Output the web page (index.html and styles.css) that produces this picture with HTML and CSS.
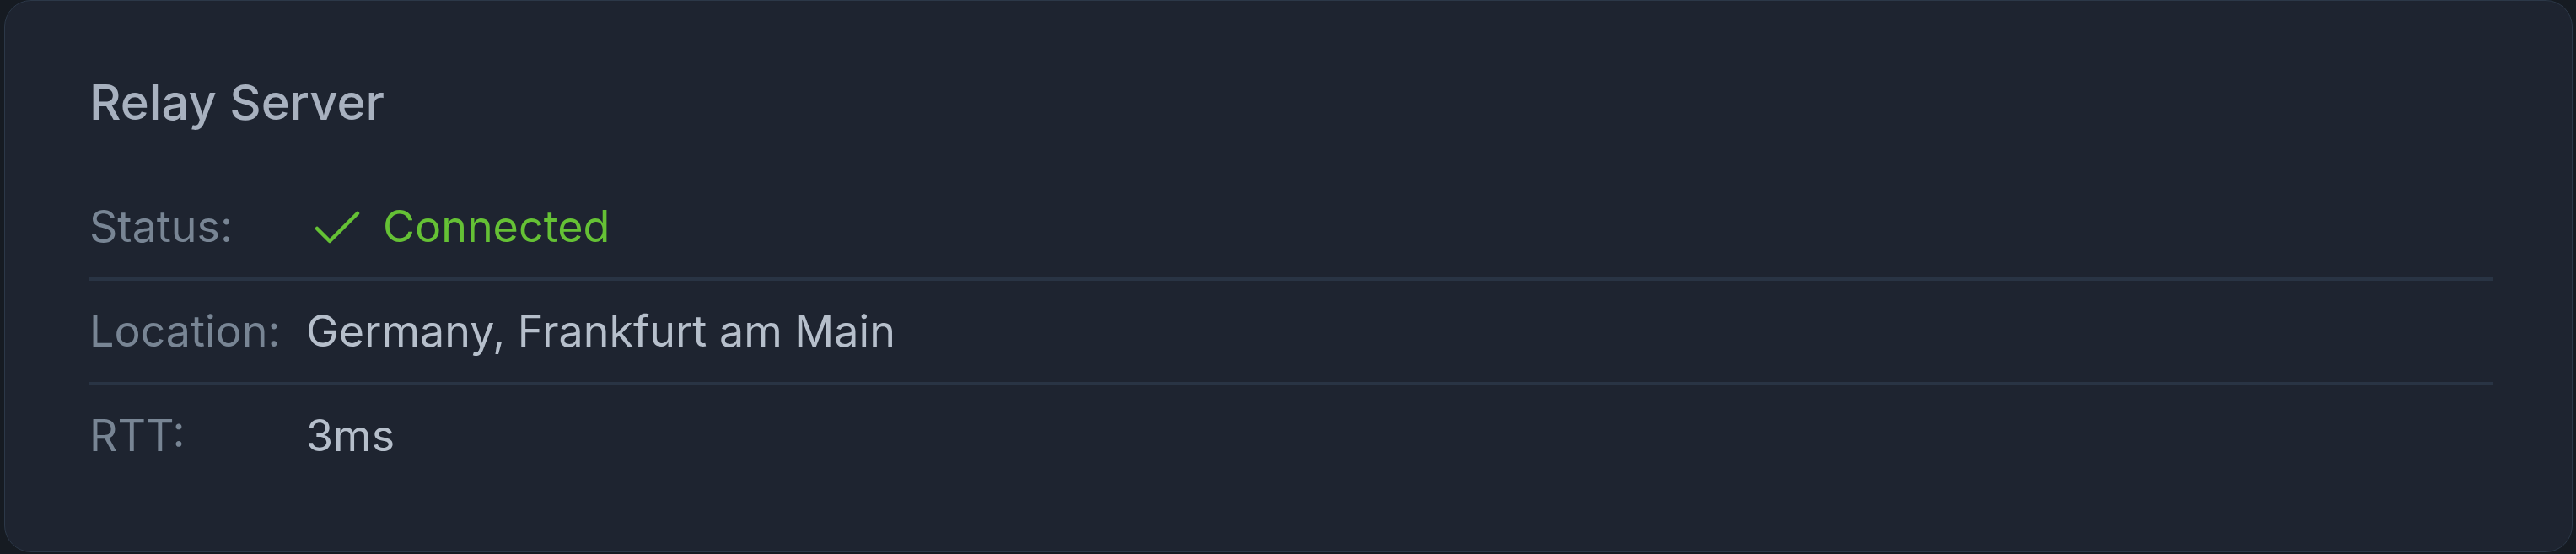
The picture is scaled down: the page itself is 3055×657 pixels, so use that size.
FILE: index.html
```html
<!DOCTYPE html>
<html lang="en">
<head>
    <meta charset="UTF-8">
    <meta name="viewport" content="width=device-width, initial-scale=1.0">
    <title>Relay Server</title>
    <link rel="stylesheet" href="styles.css">
</head>
<body>

<div class="card">
    <h2 class="card-title">Relay Server</h2>

    <div class="info-list">
        <div class="info-row">
            <span class="info-label">Status:</span>
            <span class="info-value status-ok">
                <svg class="check-icon" viewBox="4 6 16 11" width="48" height="33" fill="none" stroke="currentColor" stroke-width="1.5" stroke-linecap="round" stroke-linejoin="round">
                    <polyline points="20 6 9 17 4 12"></polyline>
                </svg>
                Connected
            </span>
        </div>
        <div class="info-row">
            <span class="info-label">Location:</span>
            <span class="info-value">Germany, Frankfurt am Main</span>
        </div>
        <div class="info-row">
            <span class="info-label">RTT:</span>
            <span class="info-value">3ms</span>
        </div>
    </div>
</div>

</body>
</html>
```

FILE: styles.css
```css
body {
    font-family: Inter, "Noto Sans", sans-serif;
    margin: 0;
    padding: 0;
    background-color: #161b22;
}
.card {
    margin: 0 4px 2px 5px;
    padding: 84px 93px 77px 100px;
    background-color: #1e2430;
    border: 1px solid #2c3848;
    border-radius: 32px;
}
.card-title {
    margin: 0 0 52px 0;
    font-size: 58px;
    font-weight: 500;
    line-height: 72px;
    color: #a8b1bf;
}
.info-row {
    display: grid;
    grid-template-columns: 257px 1fr;
    padding: 21px 0;
    font-size: 52px;
    line-height: 78px;
    border-bottom: 4px solid #293444;
}
.info-row:last-child {
    border-bottom: none;
}
.info-label {
    color: #788594;
}
.info-value {
    color: #b6bfcb;
}
.status-ok {
    display: flex;
    align-items: center;
    gap: 30px;
    color: #65c135;
}
.check-icon {
    margin-left: 13px;
    overflow: visible;
}
```
